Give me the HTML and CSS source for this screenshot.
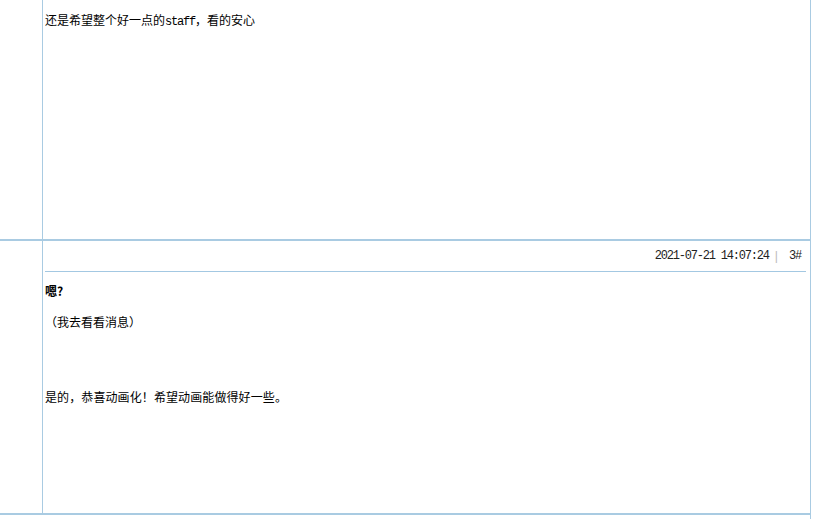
FILE: index.html
```html
<!DOCTYPE html>
<html lang="zh-CN">
<head>
<meta charset="utf-8">
<link rel="stylesheet" href="styles.css">
</head>
<body>
<div class="thread">
  <div class="post post-first">
    <div class="side"></div>
    <div class="main">
      <p class="line">还是希望整个好一点的<span class="mono">staff</span>，看的安心</p>
    </div>
  </div>
  <div class="post post-second">
    <div class="side"></div>
    <div class="main">
      <div class="meta">
        <span class="mono">2021-07-21 14:07:24</span>
        <span class="sep">|</span>
        <span class="mono">3#</span>
      </div>
      <div class="body">
        <p class="line bold">嗯?</p>
        <p class="line quote">（我去看看消息）</p>
        <p class="line reply">是的，恭喜动画化！希望动画能做得好一些。</p>
      </div>
    </div>
  </div>
</div>
</body>
</html>
```
FILE: styles.css
```css
html, body {
  margin: 0;
  padding: 0;
  background: #ffffff;
}
body {
  font-family: "Noto Sans CJK SC", "Liberation Sans", sans-serif;
  font-size: 12px;
  color: #000;
}
.thread {
  width: 810px;
  border-right: 1px solid #a9cbe2;
  height: 519px;
}
.post {
  display: grid;
  grid-template-columns: 43px 766px;
  border-bottom: 2px solid #a9cbe2;
}
.post-first { height: 239px; }
.post-second { height: 272px; }
.side {
  border-right: 1px solid #a9cbe2;
}
.main {
  padding: 0 3px 0 2px;
}
.line {
  margin: 0;
  line-height: 18px;
  white-space: nowrap;
}
.post-first .line { padding-top: 11px; }
.mono {
  font-family: "Liberation Mono", monospace;
  font-size: 12px;
  letter-spacing: -1.2px;
}
.meta {
  display: flex;
  justify-content: flex-end;
  align-items: center;
  height: 31px;
  padding-right: 5px;
  border-bottom: 1px solid #a3c8e2;
  color: #222;
  box-sizing: border-box;
  line-height: 18px;
}
.sep {
  color: #bbb;
  font-family: "Liberation Sans", sans-serif;
  margin: 0 11px 0 6px;
}
.body { padding-top: 10px; }
.bold { font-weight: bold; }
.quote { margin-top: 13px; }
.reply { margin-top: 57px; letter-spacing: 0.1px; }
```
